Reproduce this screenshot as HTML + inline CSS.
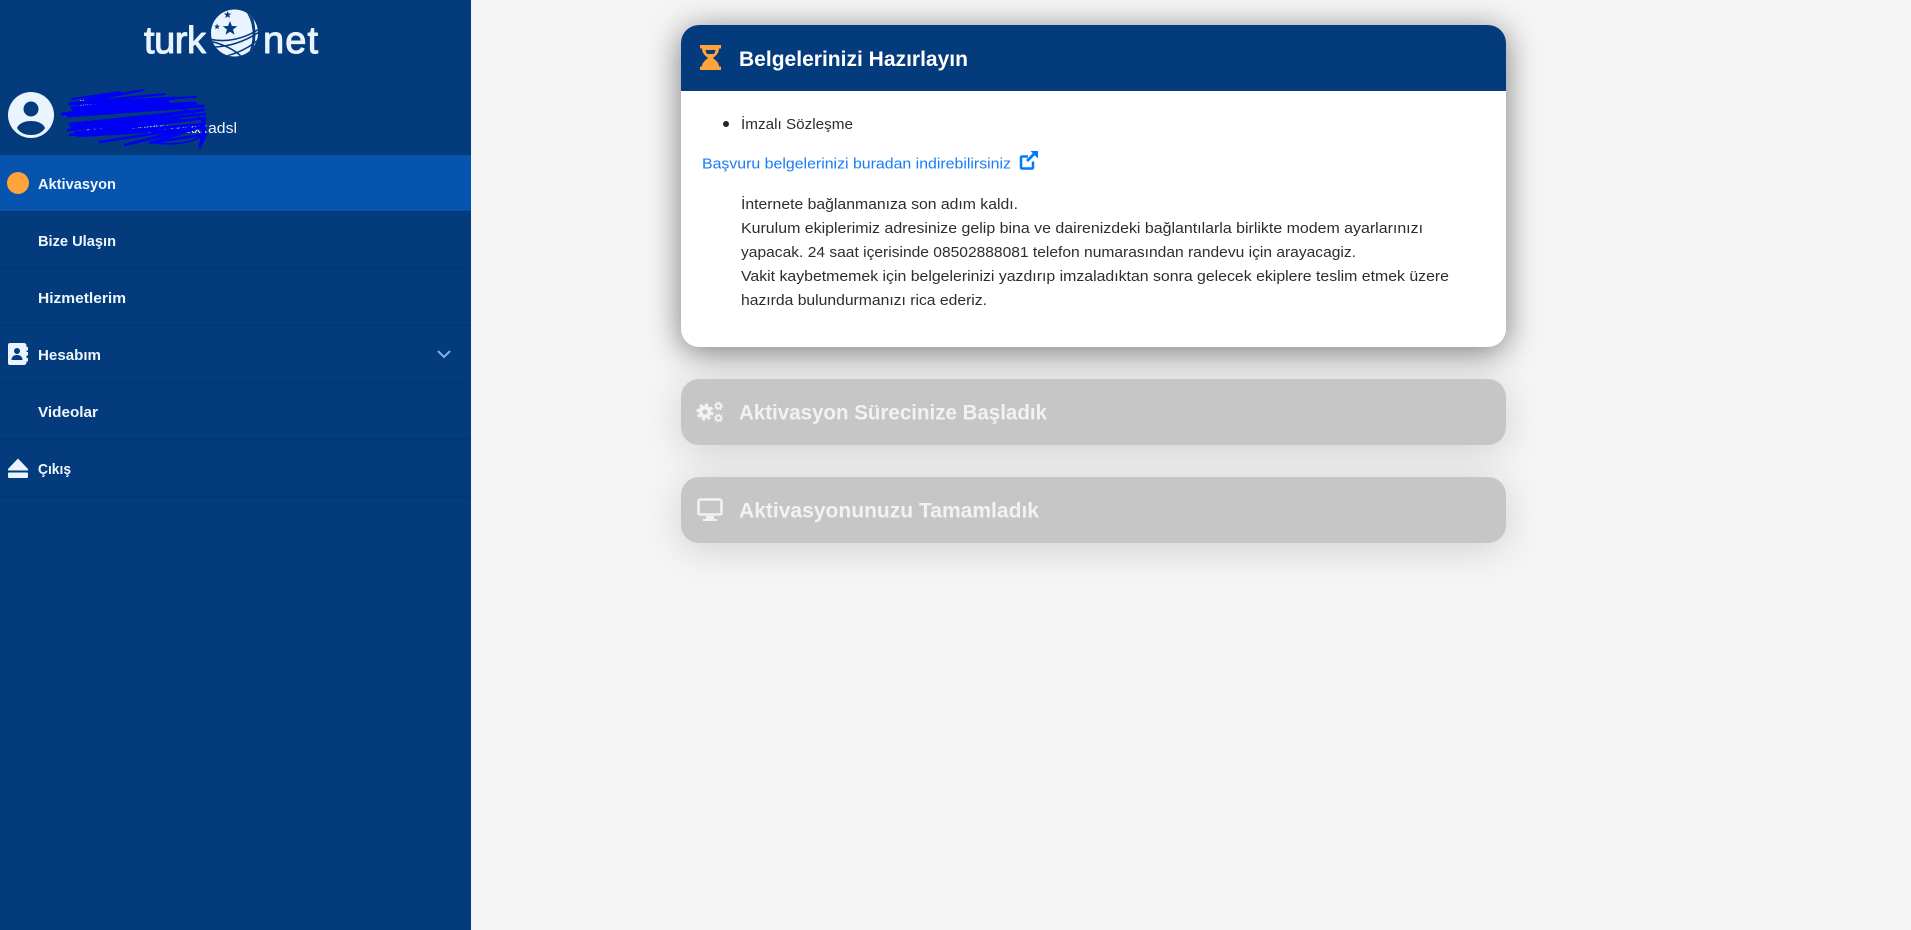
<!DOCTYPE html>
<html lang="tr"><head><meta charset="utf-8"><title>TurkNet</title>
<style>
html,body{margin:0;padding:0;width:1911px;height:930px;overflow:hidden;background:#f5f5f5}
.side{position:absolute;left:0;top:0;width:471px;height:930px;background:#033b7c}
.active{position:absolute;left:0;top:155px;width:471px;height:56px;background:#0654ad}
.sep{position:absolute;left:0;width:471px;height:1px;background:#03366f}
.card{position:absolute;left:681px;width:825px;border-radius:18px}
.c1{top:25px;height:322px;background:#fff;box-shadow:0 5px 32px rgba(0,0,0,.5);overflow:hidden}
.c1 .h{height:66px;background:#033b7c}
.c2{top:379px;height:66px;background:#c6c6c6;box-shadow:0 6px 40px rgba(0,0,0,.15)}
.c3{top:477px;height:66px;background:#c6c6c6;box-shadow:0 6px 40px rgba(0,0,0,.15)}
svg{position:absolute;left:0;top:0}
text{font-family:"Liberation Sans",sans-serif}
.m{font-size:15px;font-weight:700;fill:#eff6ff}
.b{font-size:15px;fill:#2a2e33}
.t{font-size:21px;font-weight:700}
</style></head><body>
<div class="side"></div><div class="active"></div>
<div class="sep" style="top:211px"></div><div class="sep" style="top:268px"></div><div class="sep" style="top:325px"></div><div class="sep" style="top:382px"></div><div class="sep" style="top:439px"></div><div class="sep" style="top:496px"></div>
<div class="card c1"><div class="h"></div></div><div class="card c2"></div><div class="card c3"></div>
<svg width="1911" height="930" viewBox="0 0 1911 930">
<defs><clipPath id="g"><circle cx="234.500" cy="33" r="23.500"/></clipPath></defs>
<!-- logo -->
<g fill="#eaf4ff" stroke="#eaf4ff" stroke-width="1" stroke-linejoin="round">
<text x="144" y="53" font-size="38" textLength="62" lengthAdjust="spacing">turk</text>
<text x="263" y="53" font-size="38" textLength="55" lengthAdjust="spacing">net</text>
</g>
<circle cx="234.500" cy="33" r="23.500" fill="#eaf4ff"/>
<g clip-path="url(#g)" fill="none" stroke="#033b7c" stroke-width="1.600" stroke-linecap="round">
<path d="M209 39c17 4 35 0 50-10"/><path d="M213 47c16 0 33-6 46-15"/><path d="M222 57c14-3 27-9 37-18"/><path d="M209 41c14 3 26 9 34 17"/>
<path d="M245 9c9 11 12 28 3 49"/><path d="M250 13c6 12 6 26 1 41"/>
</g>
<g fill="#033b7c">
<path d="M230 21l1.900 5 5.400.2-4.300 3.300 1.600 5.300-4.600-3-4.600 3 1.600-5.300-4.300-3.300 5.400-.2z"/>
<path d="M227.500 11l1.100 2.500 2.800.1-2.200 1.700.8 2.700-2.500-1.500-2.300 1.500.8-2.700-2.200-1.700 2.800-.1z"/>
<path d="M217 23.500l.8 2.100 2.200.1-1.700 1.400.6 2.200-1.900-1.200-1.800 1.200.6-2.200-1.700-1.400 2.200-.1z"/>
</g>
<!-- user -->
<circle cx="31" cy="115" r="23" fill="#eaf4ff"/>
<circle cx="31" cy="109" r="7.500" fill="#033b7c"/>
<path d="M17 128c2-5 8-7 14-7s12 2 14 7c-3 5-8 7-14 7s-11-2-14-7z" fill="#033b7c"/>
<text x="80" y="106" font-size="11" fill="#fff" textLength="70" lengthAdjust="spacingAndGlyphs">xxxxxxxxxxxxxxxx</text>
<text x="85" y="133" font-size="14" fill="#fff" textLength="122" lengthAdjust="spacingAndGlyphs">xxxxxxxxxxxxxxxxxxx</text>
<text x="208" y="133" font-size="15" fill="#eff6ff" textLength="29" lengthAdjust="spacingAndGlyphs">adsl</text>
<!-- scribble -->
<g fill="none" stroke="#0000f5" stroke-linecap="round" stroke-linejoin="round">
<path stroke-width="2" d="M72 99L120 92 85 100 143 90 78 103 165 94 70 103 196 97"/>
<path stroke-width="3" d="M70 104L175 98 72 108 168 101 62 114 170 104 74 110 195 103 66 114 200 106 68 116 203 106"/>
<path stroke-width="2.500" d="M70 124L204 110 72 128 205 114 68 130 180 120 75 133 205 118 70 135 204 124 78 136 205 128"/>
<path stroke-width="2.500" d="M100 142L190 128 125 145 204 126 150 143 206 134 200 147 205 118"/>
<path stroke-width="1.600" d="M150 142C170 146 200 144 205 130 207 120 190 104 150 106M70 126L130 118"/>
</g>
<!-- menu -->
<circle cx="18" cy="183" r="11" fill="#ffa33a"/>
<text class="m" x="38" y="189" textLength="78" lengthAdjust="spacingAndGlyphs">Aktivasyon</text>
<text class="m" x="38" y="246" textLength="78" lengthAdjust="spacingAndGlyphs">Bize Ulaşın</text>
<text class="m" x="38" y="303" textLength="88" lengthAdjust="spacingAndGlyphs">Hizmetlerim</text>
<text class="m" x="38" y="360" textLength="63" lengthAdjust="spacingAndGlyphs">Hesabım</text>
<text class="m" x="38" y="417" textLength="60" lengthAdjust="spacingAndGlyphs">Videolar</text>
<text class="m" x="38" y="474" textLength="33" lengthAdjust="spacingAndGlyphs">Çıkış</text>
<!-- address book -->
<path d="M10 343h14a2.500 2.500 0 0 1 2.500 2.500V362.500a2.500 2.500 0 0 1-2.500 2.500H10a2 2 0 0 1-2-2V345a2 2 0 0 1 2-2z" fill="#eaf4ff"/>
<path d="M26 347h2v3.500h-2zM26 352h2v3.500h-2zM26 358h2v3.500h-2z" fill="#eaf4ff"/>
<circle cx="17" cy="351" r="3" fill="#033b7c"/><path d="M11.500 360c0-3.500 2.500-5 5.500-5s5.500 1.500 5.500 5z" fill="#033b7c"/>
<!-- chevron -->
<path d="M438 351l6 6 6-6" fill="none" stroke="#7fb2f0" stroke-width="2"/>
<!-- eject -->
<path d="M18 458.500l10 10.500a1 1 0 0 1-1 1.500H9a1 1 0 0 1-1-1.500z" fill="#eaf4ff"/>
<rect x="8" y="472.500" width="20" height="5.500" rx="1" fill="#eaf4ff"/>
<!-- card 1 -->
<path d="M700 45h21v3.500h-2c0 4.500-2.800 7-6 9.500 3.200 2.500 6 5 6 8.500h2v3.500h-21v-3.500h2c0-3.500 2.800-6 6-8.500-3.200-2.500-6-5-6-9.500h-2z" fill="#ffa33a"/>
<path d="M705.500 50h10c-.3 1.500-.8 2.700-1.500 4h-7c-.7-1.300-1.200-2.500-1.500-4z" fill="#033b7c"/>
<text class="t" x="739" y="66" fill="#fff" textLength="229" lengthAdjust="spacingAndGlyphs">Belgelerinizi Hazırlayın</text>
<circle cx="726" cy="124" r="3" fill="#212529"/>
<text class="b" x="741" y="129" textLength="112" lengthAdjust="spacingAndGlyphs">İmzalı Sözleşme</text>
<text x="702" y="168.500" font-size="15" fill="#1a7cf5" textLength="309" lengthAdjust="spacingAndGlyphs">Başvuru belgelerinizi buradan indirebilirsiniz</text>
<g fill="none" stroke="#007bff"><path d="M1028 156.500h-6a1 1 0 0 0-1 1v10a1 1 0 0 0 1 1h10a1 1 0 0 0 1-1v-6" stroke-width="2.500"/><path d="M1027 161l8-8" stroke-width="2.800"/></g>
<path d="M1030.500 151h7.500v7.500z" fill="#007bff"/>
<text class="b" x="741" y="209" textLength="277" lengthAdjust="spacingAndGlyphs">İnternete bağlanmanıza son adım kaldı.</text>
<text class="b" x="741" y="233" textLength="682" lengthAdjust="spacingAndGlyphs">Kurulum ekiplerimiz adresinize gelip bina ve dairenizdeki bağlantılarla birlikte modem ayarlarınızı</text>
<text class="b" x="741" y="257" textLength="615" lengthAdjust="spacingAndGlyphs">yapacak. 24 saat içerisinde 08502888081 telefon numarasından randevu için arayacagiz.</text>
<text class="b" x="741" y="281" textLength="708" lengthAdjust="spacingAndGlyphs">Vakit kaybetmemek için belgelerinizi yazdırıp imzaladıktan sonra gelecek ekiplere teslim etmek üzere</text>
<text class="b" x="741" y="305" textLength="246" lengthAdjust="spacingAndGlyphs">hazırda bulundurmanızı rica ederiz.</text>
<!-- card 2 -->
<g fill="none" stroke="#f2f2f2">
<circle cx="705" cy="412" r="4.500" stroke-width="4"/>
<circle cx="705" cy="412" r="7.300" stroke-width="2.600" stroke-dasharray="3 2.730"/>
<circle cx="718.500" cy="406" r="2.400" stroke-width="1.800"/>
<circle cx="718.500" cy="406" r="3.800" stroke-width="1.400" stroke-dasharray="1.500 1.480"/>
<circle cx="718.500" cy="418" r="2.400" stroke-width="1.800"/>
<circle cx="718.500" cy="418" r="3.800" stroke-width="1.400" stroke-dasharray="1.500 1.480"/>
</g>
<text class="t" x="739" y="419.500" fill="#f2f2f2" textLength="308" lengthAdjust="spacingAndGlyphs">Aktivasyon Sürecinize Başladık</text>
<!-- card 3 -->
<rect x="698.500" y="499.500" width="23" height="15" rx="1.800" fill="none" stroke="#f2f2f2" stroke-width="2.600"/>
<path d="M706 516h8v3h-8zM703 519h14v2h-14z" fill="#f2f2f2"/>
<text class="t" x="739" y="517.500" fill="#f2f2f2" textLength="300" lengthAdjust="spacingAndGlyphs">Aktivasyonunuzu Tamamladık</text>
</svg>
</body></html>
